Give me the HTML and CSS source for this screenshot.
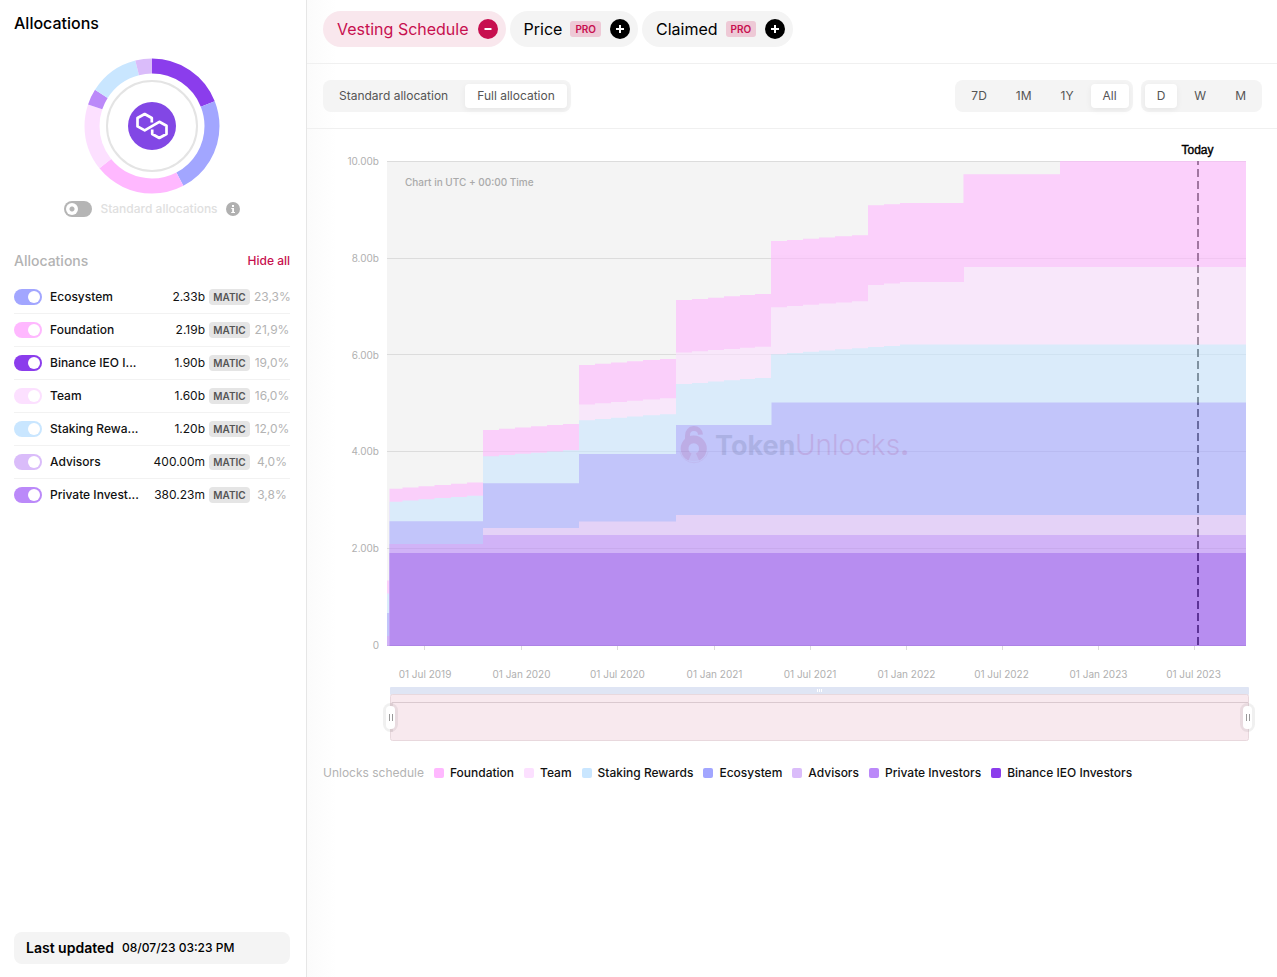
FILE: index.html
```html
<!DOCTYPE html>
<html lang="en">
<head>
<meta charset="utf-8">
<title>Vesting Schedule</title>
<link rel="stylesheet" href="styles.css">
</head>
<body>
<div class="layout">
  <aside class="sidebar">
    <h1 class="title">Allocations</h1>
    <svg class="donut" viewBox="84 58 136 136" width="136" height="136" role="img" aria-label="Allocation shares">
      <g transform="rotate(-90 152 126)" fill="none" stroke-width="15">
        <circle cx="152" cy="126" r="60" pathLength="100" stroke="#8b3dec" stroke-dasharray="19 81"/>
        <circle cx="152" cy="126" r="60" pathLength="100" stroke="#a2a6ff" stroke-dasharray="23.3 76.7" stroke-dashoffset="-19"/>
        <circle cx="152" cy="126" r="60" pathLength="100" stroke="#ffb8ff" stroke-dasharray="21.9 78.1" stroke-dashoffset="-42.3"/>
        <circle cx="152" cy="126" r="60" pathLength="100" stroke="#fce0ff" stroke-dasharray="16 84" stroke-dashoffset="-64.2"/>
        <circle cx="152" cy="126" r="60" pathLength="100" stroke="#bb89f9" stroke-dasharray="3.8 96.2" stroke-dashoffset="-80.2"/>
        <circle cx="152" cy="126" r="60" pathLength="100" stroke="#c9e6ff" stroke-dasharray="12 88" stroke-dashoffset="-84"/>
        <circle cx="152" cy="126" r="60" pathLength="100" stroke="#dabcfa" stroke-dasharray="4 96" stroke-dashoffset="-96"/>
      </g>
      <circle cx="152" cy="126" r="45" fill="none" stroke="#e4e4e4" stroke-width="2"/>
      <circle cx="152" cy="126" r="24" fill="#8247e5"/>
      <path d="M151.800 122.500V118L144.700 114L137.500 118V126.400L144.700 130.400L159.300 121.800L166.500 125.800V134L159.300 138L152.200 134V129.500" fill="none" stroke="#fff" stroke-width="2.700" stroke-linejoin="round"/>
    </svg>
    <div class="standard">
      <input class="toggle off" type="checkbox" id="std">
      <label for="std">Standard allocations</label>
      <svg width="14" height="14" viewBox="0 0 14 14" aria-hidden="true"><circle cx="7" cy="7" r="7" fill="#b0b0b0"/><path d="M6 3h2v2H6zM5.300 6H8v4h1v1H5.200v-1h1V7h-.9z" fill="#fff"/></svg>
    </div>
    <div class="list-head"><h2>Allocations</h2><button class="link" type="button">Hide all</button></div>
    <ul class="list">
      <li><input class="toggle eco" type="checkbox" id="a1" checked><label for="a1">Ecosystem</label><span class="value">2.33b</span><span class="badge">MATIC</span><span class="pct">23,3%</span></li>
      <li><input class="toggle fou" type="checkbox" id="a2" checked><label for="a2">Foundation</label><span class="value">2.19b</span><span class="badge">MATIC</span><span class="pct">21,9%</span></li>
      <li><input class="toggle bin" type="checkbox" id="a3" checked><label for="a3">Binance IEO I...</label><span class="value">1.90b</span><span class="badge">MATIC</span><span class="pct">19,0%</span></li>
      <li><input class="toggle tea" type="checkbox" id="a4" checked><label for="a4">Team</label><span class="value">1.60b</span><span class="badge">MATIC</span><span class="pct">16,0%</span></li>
      <li><input class="toggle sta" type="checkbox" id="a5" checked><label for="a5">Staking Rewa...</label><span class="value">1.20b</span><span class="badge">MATIC</span><span class="pct">12,0%</span></li>
      <li><input class="toggle adv" type="checkbox" id="a6" checked><label for="a6">Advisors</label><span class="value">400.00m</span><span class="badge">MATIC</span><span class="pct">4,0%</span></li>
      <li><input class="toggle pri" type="checkbox" id="a7" checked><label for="a7">Private Invest...</label><span class="value">380.23m</span><span class="badge">MATIC</span><span class="pct">3,8%</span></li>
    </ul>
    <div class="updated"><strong>Last updated</strong><span>08/07/23 03:23 PM</span></div>
  </aside>

  <main class="main">
    <nav class="tabs">
      <button class="tab active" type="button">Vesting Schedule
        <svg width="20" height="20" viewBox="0 0 20 20" aria-hidden="true"><circle cx="10" cy="10" r="10" fill="#c70f4f"/><path d="M6.500 10h7" stroke="#fff" stroke-width="2"/></svg>
      </button>
      <button class="tab" type="button">Price <span class="pro">PRO</span>
        <svg width="20" height="20" viewBox="0 0 20 20" aria-hidden="true"><circle cx="10" cy="10" r="10"/><path d="M6 10h8M10 6v8" stroke="#fff" stroke-width="2"/></svg>
      </button>
      <button class="tab" type="button">Claimed <span class="pro">PRO</span>
        <svg width="20" height="20" viewBox="0 0 20 20" aria-hidden="true"><circle cx="10" cy="10" r="10"/><path d="M6 10h8M10 6v8" stroke="#fff" stroke-width="2"/></svg>
      </button>
    </nav>
    <div class="toolbar">
      <div class="segment"><button type="button">Standard allocation</button><button class="on" type="button">Full allocation</button></div>
      <div class="ranges">
        <div class="segment"><button type="button">7D</button><button type="button">1M</button><button type="button">1Y</button><button class="on" type="button">All</button></div>
        <div class="segment"><button class="on" type="button">D</button><button type="button">W</button><button type="button">M</button></div>
      </div>
    </div>

    <section class="content">
      <svg class="chart" viewBox="323 129 939 632" role="img" aria-label="Vesting schedule chart">
        <rect x="387" y="161" width="859" height="485" fill="#f4f4f4"/>
        <path d="M387 161.500H1246M387 258.500H1246M387 354.500H1246M387 451.500H1246M387 548.500H1246M387 645.500H1246" stroke="#dcdcdc"/>
        <path d="M424.500 646v4M521.500 646v4M617.500 646v4M714.500 646v4M810.500 646v4M906.500 646v4M1002.500 646v4M1098.500 646v4M1194.500 646v4" stroke="#dcdcdc"/>
        <path d="M1198 161V645" stroke="#000" stroke-opacity=".92" stroke-width="2" stroke-dasharray="8 4" stroke-dashoffset="4"/>
        <g opacity=".6">
          <path fill="#ffb8ff" d="M387 646V580.500H389.500V488.700H402.500V487.500H418.500V486.300H434.500V485H451V483.800H467V482.500H483V430H499V428.800H515V427.500H531V426.300H547V425.100H563V424H579V365H595V363.800H611V362.500H627V361.300H643V360H660V359H676V300H692V299H708V297.700H724V296.300H740V295H755V294H771V241H787V240H803V238.700H819V237.500H835V236.300H852V235.200H868V205.200H884V204.200H900V203H963.500V174.200H1060V161H1246V646Z"/>
          <path fill="#fce0ff" d="M579 646V404.500H595V403.200H611V402H627V400.700H643V399.500H660V398.200H676V352.500H692V351.300H708V350H724V349H740V347.800H755V346.700H771V307.200H787V306H803V304.800H819V303.600H836V302.400H852V301.200H868V285H884V283.500H900V282H964V267H1246V646Z"/>
          <path fill="#c9e6ff" d="M387 646V593.500H389.500V501.700H402.500V500.500H418.500V499.200H434.500V498H451V496.900H467V495.700H483V456.300H499V455H515V453.800H531V452.700H547V451.500H563V450.300H579V420.200H595V419H611V417.800H627V416.500H643V415.300H660V414.200H676V384H692V383H708V381.500H724V380.300H740V379H755V378H771V354.200H787V353H803V351.700H819V350.500H835V349.300H852V348.200H868V347H884V346H900V344.500H1246V646Z"/>
          <path fill="#a2a6ff" d="M387 646V613H389.500V521.300H483V483.200H579V454H676V425H771.500V402.500H1246V646Z"/>
          <path fill="#dabcfa" d="M483 646V528H579V521.500H676V515H1246V646Z"/>
          <path fill="#bb89f9" d="M387 646V636H389.500V544H483V535H1246V646Z"/>
          <path fill="#8f49ee" d="M389.500 646V553H1246V646Z"/>
        </g>
        <g class="watermark" opacity=".15">
          <path d="M687.500 441V435.500a6.500 6.500 0 0 1 13-.8" fill="none" stroke="#a52873" stroke-width="5"/>
          <path d="M690 457a9.200 9.200 0 1 1 7.500 0" fill="none" stroke="#a52873" stroke-width="7.600"/>
          <path d="M690.500 452L687 459.500Q694 463 701 459.500L697.500 452Z" fill="#a52873" opacity=".3"/>
          <path d="M680 452a14.500 14.500 0 0 0 28 0" fill="none" stroke="#a52873" opacity=".4"/>
          <text x="715" y="455" class="wm-bold">Token</text>
          <text x="795" y="455" class="wm-light">Unlocks<tspan class="wm-dot">.</tspan></text>
        </g>
        <text class="today" x="1197.500" y="154">Today</text>
        <text class="note" x="405" y="186">Chart in UTC + 00:00 Time</text>
        <g class="axis y">
          <text x="379" y="165">10.00b</text><text x="379" y="262">8.00b</text><text x="379" y="359">6.00b</text><text x="379" y="455">4.00b</text><text x="379" y="552">2.00b</text><text x="379" y="649">0</text>
        </g>
        <g class="axis x">
          <text x="425" y="678">01 Jul 2019</text><text x="521.500" y="678">01 Jan 2020</text><text x="617.500" y="678">01 Jul 2020</text><text x="714.500" y="678">01 Jan 2021</text><text x="810" y="678">01 Jul 2021</text><text x="906.500" y="678">01 Jan 2022</text><text x="1001.500" y="678">01 Jul 2022</text><text x="1098.500" y="678">01 Jan 2023</text><text x="1193.500" y="678">01 Jul 2023</text>
        </g>
        <rect x="390" y="687" width="859" height="8" rx="1" fill="#dfe5f4"/>
        <path d="M817.500 689v3M819.500 689v3M821.500 689v3" stroke="#fff"/>
        <rect x="390.500" y="694.500" width="858" height="46" rx="2" fill="#f8e9ee" stroke="#e8d8dd"/>
        <path d="M392 732V702.500H1248" fill="none" stroke="#dac9cf"/>
        <g id="grip">
          <rect x="383" y="703" width="15" height="29" rx="7.500" fill="#000" opacity=".06"/>
          <rect x="386" y="706" width="9" height="23" rx="4" fill="#fff"/>
          <path d="M389.500 714v7M392.500 714v7" stroke="#999"/>
        </g>
        <use href="#grip" x="857"/>
      </svg>
      <ul class="legend">
        <li class="caption">Unlocks schedule</li>
        <li><i class="fou"></i>Foundation</li>
        <li><i class="tea"></i>Team</li>
        <li><i class="sta"></i>Staking Rewards</li>
        <li><i class="eco"></i>Ecosystem</li>
        <li><i class="adv"></i>Advisors</li>
        <li><i class="pri"></i>Private Investors</li>
        <li><i class="bin"></i>Binance IEO Investors</li>
      </ul>
    </section>
  </main>
</div>
</body>
</html>
```

FILE: styles.css
```css
* { box-sizing: border-box; }
body {
  margin: 0;
  font-family: Inter, "Liberation Sans", sans-serif;
  font-size: 12px;
  line-height: 16px;
  color: #111;
  background: #fff;
}
h1, h2, ul { margin: 0; padding: 0; list-style: none; }
button { font: inherit; color: inherit; border: 0; background: none; padding: 0; cursor: pointer; }

.layout { display: flex; min-height: 100vh; }

.eco { background: #a2a6ff; }
.fou { background: #ffb8ff; }
.bin { background: #8b3dec; }
.tea { background: #fce0ff; }
.sta { background: #c9e6ff; }
.adv { background: #dabcfa; }
.pri { background: #bb89f9; }

/* Sidebar */
.sidebar {
  width: 307px;
  flex: none;
  display: flex;
  flex-direction: column;
  padding: 11px 16px 13px 14px;
  border-right: 1px solid #e6e6e6;
}
.title { font-size: 16px; line-height: 24px; font-weight: 500; color: #000; }
.donut { align-self: center; margin-top: 23px; }
.standard {
  display: flex;
  align-items: center;
  justify-content: center;
  gap: 8px;
  margin-top: 7px;
  color: #e0e0e0;
  font-weight: 500;
}
.toggle {
  appearance: none;
  flex: none;
  width: 28px;
  height: 16px;
  margin: 0;
  border-radius: 8px;
  display: flex;
  align-items: center;
  justify-content: flex-end;
  padding: 2px;
}
.toggle::before { content: ""; width: 12px; height: 12px; border-radius: 50%; background: #fff; }
.toggle.off { background: #b5b5b5; justify-content: flex-start; }
.toggle.off::before { background: radial-gradient(circle, #b5b5b5 2px, #fff 3px); }
.list-head { display: flex; align-items: center; justify-content: space-between; margin-top: 34px; height: 20px; }
.list-head h2 { font-size: 14px; line-height: 20px; font-weight: 500; color: #b3b3b3; }
.link { color: #c70f4f; font-weight: 500; }
.list { margin-top: 10px; }
.list li { display: flex; align-items: center; height: 33px; border-bottom: 1px solid #f2f2f2; font-weight: 500; }
.list li:last-child { border-bottom-color: transparent; }
.list label { flex: 1; margin-left: 8px; white-space: nowrap; }
.value { font-weight: 400; }
.badge {
  min-width: 41px;
  margin: 0 4px;
  padding: 0 4px;
  border-radius: 4px;
  background: #e5e5e5;
  color: #555;
  font-size: 10px;
  font-weight: 600;
  text-align: center;
}
.pct { width: 36px; text-align: center; color: #b3b3b3; font-weight: 400; }
.updated {
  margin-top: auto;
  height: 32px;
  display: flex;
  align-items: center;
  gap: 8px;
  padding: 0 12px;
  border-radius: 8px;
  background: #f4f4f4;
  color: #000;
  font-weight: 500;
}
.updated strong { font-size: 14px; font-weight: 600; }

/* Main column */
.main { flex: 1; min-width: 0; background: linear-gradient(90deg, #fbfbfb, #fff 30px); }
.tabs { display: flex; gap: 4px; padding: 11px 16px 16px; border-bottom: 1px solid #f0f0f0; }
.tab {
  display: flex;
  align-items: center;
  gap: 9px;
  height: 36px;
  padding: 0 8px 0 14px;
  border-radius: 18px;
  background: #f4f4f4;
  color: #000;
  font-size: 16px;
}
.tab.active { background: #f9e7ed; color: #c70f4f; }
.pro {
  margin-left: -1px;
  padding: 0 5px;
  border-radius: 3px;
  background: #eec9d6;
  color: #c70f4f;
  font-size: 10px;
  line-height: 16px;
  font-weight: 600;
}
.toolbar { display: flex; justify-content: space-between; padding: 16px 15px 16px 16px; border-bottom: 1px solid #f0f0f0; }
.ranges { display: flex; gap: 8px; }
.segment { display: flex; gap: 5px; padding: 4px; border-radius: 8px; background: #f4f4f4; color: #555; }
.segment button { height: 24px; padding: 0 12px; border-radius: 4px; }
.segment .on { background: #fff; box-shadow: 0 2px 6px rgba(0, 0, 0, .06); }

.content { padding: 0 15px 16px 16px; }
.chart { display: block; width: 100%; height: auto; overflow: visible; }
.axis text { font-size: 10px; fill: #b0b0b0; }
.axis.y { text-anchor: end; }
.axis.x { text-anchor: middle; }
.note { font-size: 10px; font-weight: 500; fill: #aaa; }
.today {
  font-family: "Liberation Sans", Arial, sans-serif;
  font-size: 12px;
  text-anchor: middle;
  fill: #000;
  stroke: #000;
  stroke-width: .4px;
}
.wm-bold { font-size: 27px; font-weight: 700; fill: #37466b; }
.wm-light { font-size: 28px; font-weight: 300; fill: #a52873; }
.wm-dot { font-weight: 700; }
.legend { display: flex; flex-wrap: wrap; gap: 0 10px; line-height: 24px; font-weight: 500; }
.legend li { display: flex; align-items: center; gap: 6px; }
.legend .caption { color: #b3b3b3; font-weight: 400; }
.legend i { width: 10px; height: 10px; border-radius: 2px; }
```
